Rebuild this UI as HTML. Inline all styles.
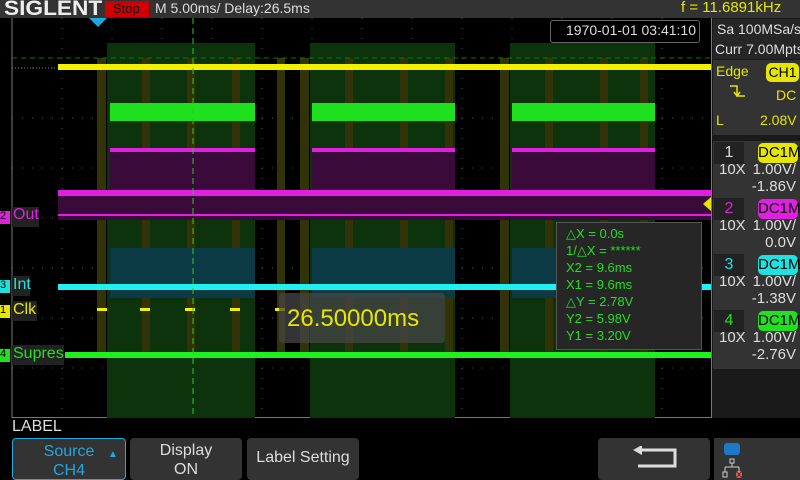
<!DOCTYPE html>
<html><head><style>
*{margin:0;padding:0;box-sizing:border-box}
body{width:800px;height:480px;background:#000;position:relative;overflow:hidden;font-family:"Liberation Sans",sans-serif}
.a{position:absolute}
.t{position:absolute;white-space:nowrap}
.btn{position:absolute;top:438px;height:42px;background:#333;border-radius:4px;color:#ddd;font-size:16px;text-align:center;line-height:19px;padding-top:3px}
.ch{position:absolute;left:713px;width:87px;height:60px;background:#333}
.num{position:absolute;left:1px;top:1px;width:30px;height:22px;background:#222;font-size:16px;text-align:center;line-height:22px}
.dc{position:absolute;right:2px;top:2px;width:40px;height:20px;border-radius:5px;font-size:15px;color:#000;text-align:center;line-height:20px}
.v{position:absolute;right:4px;font-size:15px;color:#ddd}
</style></head><body>
<div class="a" style="left:0;top:0;width:800px;height:18px;background:#333"></div>
<div class="t" style="left:4px;top:-3px;font-size:21px;font-weight:bold;color:#eee;transform:scaleX(1.08);transform-origin:left">SIGLENT</div>
<div class="a" style="left:105px;top:1px;width:44px;height:16px;background:#d00000"></div>
<div class="t" style="left:113px;top:1px;font-size:13px;color:#111">Stop</div>
<div class="t" style="left:155px;top:0px;font-size:14px;color:#ddd">M 5.00ms/ Delay:26.5ms</div>
<div class="t" style="left:681px;top:-1px;font-size:15px;color:#e6e600">f = 11.6891kHz</div>
<div class="a" style="left:712px;top:18px;width:88px;height:400px;background:#1a1a1a"></div>
<div class="a" style="left:713px;top:19px;width:87px;height:40px;background:#262626"></div>
<div class="t" style="left:717px;top:21px;font-size:14px;color:#ddd">Sa 100MSa/s</div>
<div class="t" style="left:715px;top:41px;font-size:14px;color:#ddd">Curr 7.00Mpts</div>
<div class="a" style="left:713px;top:60px;width:87px;height:75px;background:#333"></div>
<div class="t" style="left:716px;top:63px;font-size:14px;color:#e6e600">Edge</div>
<div class="a" style="left:766px;top:63px;width:33px;height:19px;background:#e6e600;border-radius:5px;color:#000;font-size:14px;text-align:center;line-height:19px">CH1</div>
<svg class="a" style="left:728px;top:84px" width="20" height="16"><path d="M2 2H9V12H17M6 8L9 12L12 8" stroke="#e6e600" stroke-width="1.5" fill="none"/></svg>
<div class="t" style="left:776px;top:87px;font-size:14px;color:#e6e600">DC</div>
<div class="t" style="left:716px;top:112px;font-size:14px;color:#e6e600">L</div>
<div class="t" style="left:760px;top:112px;font-size:14px;color:#e6e600">2.08V</div>

<div class="ch" style="top:141px"><div class="num" style="color:#ddd">1</div><div class="dc" style="background:#e6e600">DC1M</div>
<div class="v" style="left:6px;top:20px">10X</div><div class="v" style="top:20px">1.00V/</div><div class="v" style="top:37px">-1.86V</div></div>
<div class="ch" style="top:197px"><div class="num" style="color:#e020e0">2</div><div class="dc" style="background:#e020e0">DC1M</div>
<div class="v" style="left:6px;top:20px">10X</div><div class="v" style="top:20px">1.00V/</div><div class="v" style="top:37px">0.0V</div></div>
<div class="ch" style="top:253px"><div class="num" style="color:#20e0e0">3</div><div class="dc" style="background:#20e0e0">DC1M</div>
<div class="v" style="left:6px;top:20px">10X</div><div class="v" style="top:20px">1.00V/</div><div class="v" style="top:37px">-1.38V</div></div>
<div class="ch" style="top:309px"><div class="num" style="color:#20e020">4</div><div class="dc" style="background:#20e020">DC1M</div>
<div class="v" style="left:6px;top:20px">10X</div><div class="v" style="top:20px">1.00V/</div><div class="v" style="top:37px">-2.76V</div></div>

<svg class="a" style="left:0;top:18px" width="712" height="400">
<g stroke="#555" stroke-width="1" stroke-dasharray="1,9">
<path d="M62 0V400M112 0V400M162 0V400M212 0V400M262 0V400M312 0V400M362 0V400M412 0V400M462 0V400M512 0V400M562 0V400M612 0V400M662 0V400"/>
<path d="M12 50H712M12 100H712M12 150H712M12 200H712M12 250H712M12 300H712M12 350H712"/>
</g>
<path d="M12 0V400" stroke="#777"/>
<path d="M12 399.5H711.5V0" stroke="#777" fill="none"/>
<g fill="#0d330d">
<rect x="107" y="25" width="148" height="375"/><rect x="310" y="25" width="145" height="375"/><rect x="510" y="25" width="145" height="375"/>
</g>
<g fill="#33330a">
<rect x="97" y="40" width="9" height="300"/><rect x="142" y="40" width="8" height="300"/><rect x="187" y="40" width="8" height="300"/><rect x="232" y="40" width="8" height="300"/><rect x="277" y="40" width="8" height="300"/><rect x="300" y="40" width="9" height="300"/><rect x="345" y="40" width="8" height="300"/><rect x="400" y="40" width="8" height="300"/><rect x="445" y="40" width="8" height="300"/><rect x="500" y="40" width="9" height="300"/><rect x="545" y="40" width="8" height="300"/><rect x="600" y="40" width="8" height="300"/><rect x="640" y="40" width="8" height="300"/>
</g>
<g fill="#0c3a44"><rect x="110" y="230" width="145" height="50"/><rect x="312" y="230" width="143" height="50"/><rect x="512" y="230" width="143" height="50"/></g>
<g fill="#1ee01e"><rect x="110" y="85" width="145" height="18"/><rect x="312" y="85" width="143" height="18"/><rect x="512" y="85" width="143" height="18"/></g>
<g fill="#3a0a3a"><rect x="110" y="132" width="145" height="40"/><rect x="312" y="132" width="143" height="40"/><rect x="512" y="132" width="143" height="40"/><rect x="58" y="172" width="653" height="30"/></g>
<g fill="#e020e0"><rect x="110" y="130" width="145" height="4"/><rect x="312" y="130" width="143" height="4"/><rect x="512" y="130" width="143" height="4"/>
<rect x="58" y="172" width="653" height="6"/><rect x="58" y="196" width="653" height="2"/></g>
<path d="M12 40H712" stroke="#0a7a0a" stroke-dasharray="5,4"/>
<path d="M12 50H57" stroke="#888" stroke-dasharray="1,2"/>
<rect x="58" y="46" width="653" height="6" fill="#f0f000"/>
<rect x="58" y="266" width="653" height="6" fill="#20f0f0"/>
<g fill="#f0f000"><rect x="97" y="290" width="10" height="3"/><rect x="140" y="290" width="10" height="3"/><rect x="185" y="290" width="10" height="3"/><rect x="230" y="290" width="10" height="3"/><rect x="275" y="290" width="10" height="3"/></g>
<rect x="65" y="334" width="646" height="6" fill="#20f020"/>
<path d="M193 0V400" stroke="#20d020" stroke-dasharray="6,4"/>
<path d="M89 0H107L98 9Z" fill="#1ea8e0"/>
<path d="M711 179L703 186L711 193Z" fill="#e6e600"/>
</svg>
<div class="a" style="left:0;top:211px;width:10px;height:13px;background:#e020e0"></div><div class="t" style="left:0;top:210px;font-size:11px;color:#000">2</div>
<div class="a" style="left:12px;top:207px;width:27px;height:20px;background:#222"></div><div class="t" style="left:13px;top:206px;font-size:16px;color:#e020e0">Out</div>
<div class="a" style="left:0;top:280px;width:10px;height:13px;background:#20e0e0"></div><div class="t" style="left:0;top:279px;font-size:11px;color:#000">3</div>
<div class="a" style="left:12px;top:276px;width:18px;height:20px;background:#222"></div><div class="t" style="left:13px;top:276px;font-size:16px;color:#20e0e0">Int</div>
<div class="a" style="left:0;top:305px;width:10px;height:13px;background:#e6e600"></div><div class="t" style="left:0;top:304px;font-size:11px;color:#000">1</div>
<div class="a" style="left:12px;top:301px;width:25px;height:20px;background:#222"></div><div class="t" style="left:13px;top:301px;font-size:16px;color:#e6e600">Clk</div>
<div class="a" style="left:0;top:349px;width:10px;height:13px;background:#20e020"></div><div class="t" style="left:0;top:348px;font-size:11px;color:#000">4</div>
<div class="a" style="left:12px;top:345px;width:52px;height:20px;background:#222"></div><div class="t" style="left:13px;top:345px;font-size:16px;color:#20e020">Supres</div>
<div class="a" style="left:550px;top:20px;width:150px;height:23px;background:#000;border:1px solid #666;border-radius:3px"></div>
<div class="t" style="left:566px;top:22px;font-size:14px;color:#ddd">1970-01-01 03:41:10</div>
<div class="a" style="left:279px;top:293px;width:166px;height:50px;background:rgba(70,70,70,0.75);border-radius:4px"></div>
<div class="t" style="left:287px;top:305px;font-size:24px;color:#e6e600">26.50000ms</div>
<div class="a" style="left:556px;top:222px;width:146px;height:128px;background:#262626;border:1px solid #555"></div>
<div class="t" style="left:566px;top:225px;font-size:13px;line-height:17px;color:#20e020">△X = 0.0s<br>1/△X = ******<br>X2 = 9.6ms<br>X1 = 9.6ms<br>△Y = 2.78V<br>Y2 = 5.98V<br>Y1 = 3.20V</div>
<div class="t" style="left:12px;top:418px;font-size:16px;color:#ddd">LABEL</div>
<div class="btn" style="left:12px;width:114px;border:1px solid #1ea8e0;color:#1ea8e0">Source<br>CH4</div>
<div class="t" style="left:108px;top:449px;font-size:10px;color:#1ea8e0">▲</div>
<div class="btn" style="left:130px;width:112px">Display<br>ON</div>
<div class="btn" style="left:247px;width:112px;line-height:40px;padding-top:0">Label Setting</div>
<div class="btn" style="left:598px;width:112px"></div>
<svg class="a" style="left:630px;top:446px" width="50" height="26"><path d="M10 4H45V20H8" stroke="#ddd" stroke-width="3" fill="none"/><path d="M3 4L12 -1V9Z" fill="#ddd"/></svg>
<div class="a" style="left:714px;top:438px;width:86px;height:42px;background:#333"></div>
<div class="a" style="left:724px;top:443px;width:16px;height:12px;background:#1e78c8;border-radius:3px"></div>
<svg class="a" style="left:722px;top:458px" width="22" height="22"><path d="M8 1h4v4h-4zM10 5v4M3 9h14M3 9v5M17 9v5M1 14h4v5h-4zM15 14h4v5h-4z" stroke="#ccc" fill="none"/><path d="M14 13l6 7M20 13l-6 7" stroke="#d00"/></svg>
</body></html>
